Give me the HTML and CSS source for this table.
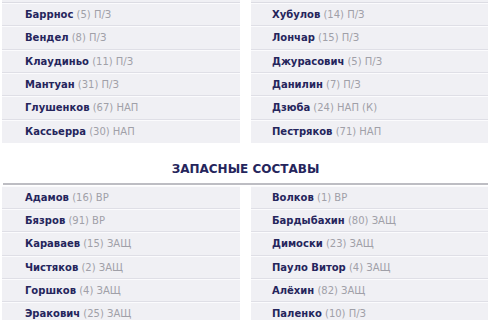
FILE: index.html
```html
<!DOCTYPE html>
<html lang="ru">
<head>
<meta charset="utf-8">
<link rel="stylesheet" href="styles.css">
</head>
<body>
<div class="page">
  <div class="cols top">
    <ul class="list">
      <li class="row"><b>Баррнос</b> <span>(5) П/З</span></li>
      <li class="row"><b>Вендел</b> <span>(8) П/З</span></li>
      <li class="row"><b>Клаудиньо</b> <span>(11) П/З</span></li>
      <li class="row"><b>Мантуан</b> <span>(31) П/З</span></li>
      <li class="row"><b>Глушенков</b> <span>(67) НАП</span></li>
      <li class="row"><b>Кассьерра</b> <span>(30) НАП</span></li>
    </ul>
    <ul class="list">
      <li class="row"><b>Хубулов</b> <span>(14) П/З</span></li>
      <li class="row"><b>Лончар</b> <span>(15) П/З</span></li>
      <li class="row"><b>Джурасович</b> <span>(5) П/З</span></li>
      <li class="row"><b>Данилин</b> <span>(7) П/З</span></li>
      <li class="row"><b>Дзюба</b> <span>(24) НАП (К)</span></li>
      <li class="row"><b>Пестряков</b> <span>(71) НАП</span></li>
    </ul>
  </div>
  <h2 class="title">ЗАПАСНЫЕ СОСТАВЫ</h2>
  <div class="cols bottom">
    <ul class="list">
      <li class="row"><b>Адамов</b> <span>(16) ВР</span></li>
      <li class="row"><b>Бязров</b> <span>(91) ВР</span></li>
      <li class="row"><b>Караваев</b> <span>(15) ЗАЩ</span></li>
      <li class="row"><b>Чистяков</b> <span>(2) ЗАЩ</span></li>
      <li class="row"><b>Горшков</b> <span>(4) ЗАЩ</span></li>
      <li class="row"><b>Эракович</b> <span>(25) ЗАЩ</span></li>
    </ul>
    <ul class="list">
      <li class="row"><b>Волков</b> <span>(1) ВР</span></li>
      <li class="row"><b>Бардыбахин</b> <span>(80) ЗАЩ</span></li>
      <li class="row"><b>Димоски</b> <span>(23) ЗАЩ</span></li>
      <li class="row"><b>Пауло Витор</b> <span>(4) ЗАЩ</span></li>
      <li class="row"><b>Алёхин</b> <span>(82) ЗАЩ</span></li>
      <li class="row"><b>Паленко</b> <span>(10) П/З</span></li>
    </ul>
  </div>
</div>
</body>
</html>
```
FILE: styles.css
```css
html, body {
  margin: 0;
  padding: 0;
  background: #ffffff;
  overflow: hidden;
}
.page {
  width: 500px;
  height: 320px;
  overflow: hidden;
  padding: 0 12px 0 2px;
  box-sizing: border-box;
  font-family: "DejaVu Sans", sans-serif;
  font-size: 10px;
}
.cols {
  display: grid;
  grid-template-columns: 238px 237px;
  column-gap: 11px;
}
.list {
  list-style: none;
  margin: 0;
  padding: 0;
}
.top .list {
  padding-top: 2px;
  background: #f0f0f4;
}
.top .list::before {
  content: "";
  display: block;
  height: 1px;
  background: #dcdce3;
}
.row {
  height: 21.35px;
  padding-top: 1px;
  line-height: 21.35px;
  border-bottom: 1px solid #dfdfe6;
  box-shadow: inset 0 1px 0 #fbfbfd;
  background: #f0f0f4;
  padding-left: 23px;
  white-space: nowrap;
  color: #a0a0a8;
}
.cols .list + .list .row {
  padding-left: 21px;
}
.row b {
  color: #25255c;
  font-weight: 700;
}
.top .row:last-child {
  border-bottom: 0;
  height: 22px;
}
.title {
  margin: 18px 0 0 1px;
  padding: 0 0 6px;
  border-bottom: 2px solid #bdbdc3;
  text-align: center;
  font-size: 12px;
  font-weight: 700;
  color: #25255c;
  line-height: 16px;
}
.bottom .list {
  padding-top: 1px;
}
```
